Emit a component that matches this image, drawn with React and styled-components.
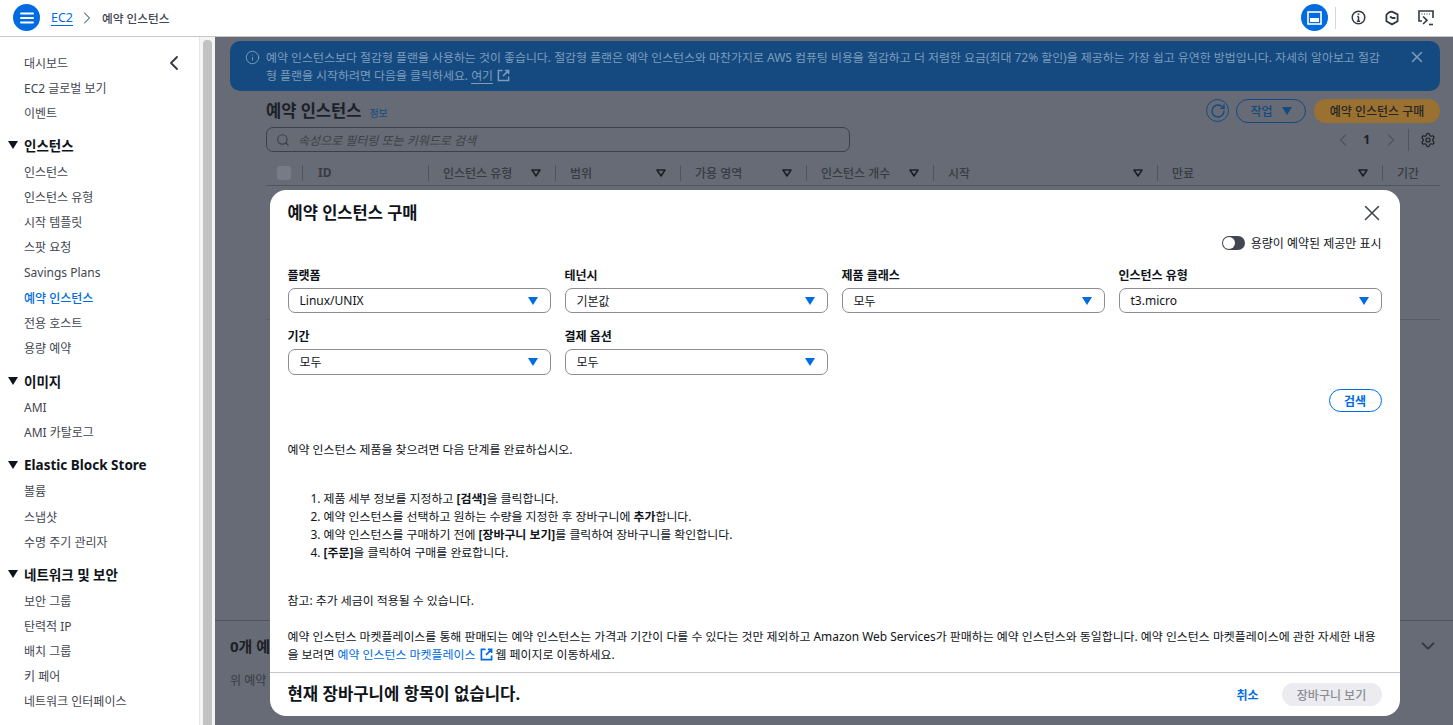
import React from 'react';
import styled, { createGlobalStyle } from 'styled-components';
import { ChevronLeft, ChevronRight, ChevronDown, X, Search, Settings, RotateCw, Info } from 'lucide-react';

const GlobalStyle = createGlobalStyle`
  html, body {
    margin: 0;
    height: 100%;
    overflow: hidden;
    background: #fff;
    font-family: "Noto Sans", "Noto Sans CJK KR", sans-serif;
    font-size: 12px;
    color: #0f141a;
  }
  * { box-sizing: border-box; }
`;

const Shell = styled.div`
  width: 1453px;
  height: 725px;
  display: flex;
  flex-direction: column;
  overflow: hidden;
`;

/* top bar */
const TopBar = styled.header`
  height: 37px;
  flex: none;
  display: flex;
  align-items: center;
  padding: 0 13px 1px 13px;
  border-bottom: 1px solid #c6c6cd;
`;

const RoundButton = styled.div`
  width: 27px;
  height: 27px;
  border-radius: 50%;
  background: #006ce0;
  display: flex;
  align-items: center;
  justify-content: center;
  flex: none;
`;

const Crumbs = styled.div`
  display: flex;
  align-items: center;
  margin-left: 11px;
  font-size: 12px;
  flex: 1;
`;

const CrumbLink = styled.span`
  color: #006ce0;
  font-size: 12.5px;
  border-bottom: 1px solid #006ce0;
  line-height: 15px;
`;

const CrumbCurrent = styled.span`
  color: #424650;
  font-weight: 500;
  font-size: 11.7px;
`;

const CrumbArrow = styled(ChevronRight)`
  margin: 0 5px 0 4px;
  color: #7d8998;
`;

const TopActions = styled.div`
  display: flex;
  align-items: center;
`;

const TopDivider = styled.div`
  width: 1px;
  height: 22px;
  background: #d5d7db;
  margin: 0 13px 0 7px;
`;

const TopIcon = styled.div`
  width: 18px;
  height: 18px;
  margin-right: 16px;
  display: flex;
  align-items: center;
  justify-content: center;
  color: #333843;
  &:last-child { margin-right: 5px; }
`;

/* sidebar */
const Body = styled.div`
  flex: 1;
  display: flex;
  min-height: 0;
`;

const Sidebar = styled.nav`
  position: relative;
  width: 200px;
  flex: none;
  padding: 13px 0 0 8px;
  border-right: 1px solid #e6e6e9;
`;

const CollapseButton = styled(ChevronLeft)`
  position: absolute;
  top: 14px;
  left: 162px;
  color: #333843;
`;

const NavGroup = styled.div`
  margin-bottom: 8px;
`;

const NavItem = styled.div`
  height: 25.15px;
  display: flex;
  align-items: center;
  padding-left: 16px;
  font-size: 12px;
  color: ${p => (p.$active ? '#006ce0' : '#424650')};
  font-weight: ${p => (p.$active ? 500 : 400)};
  white-space: nowrap;
`;

const NavHeading = styled.div`
  height: 26px;
  padding-bottom: 2px;
  display: flex;
  align-items: center;
  font-size: 13.5px;
  font-weight: 700;
  color: #0f141a;
  white-space: nowrap;
`;

const HeadingCaret = styled.span`
  width: 0;
  height: 0;
  margin-right: 6px;
  border-left: 5px solid transparent;
  border-right: 5px solid transparent;
  border-top: 8px solid #0f141a;
`;

const ScrollTrack = styled.div`
  width: 15px;
  flex: none;
  background: #f4f4f4;
  padding: 3px 3px 0 3px;
`;

const ScrollThumb = styled.div`
  height: 100%;
  background: #c2c2c2;
  border-radius: 4px 4px 0 0;
`;

/* dimmed page behind the modal */
const Main = styled.main`
  position: relative;
  flex: 1;
  min-width: 0;
  display: flex;
  flex-direction: column;
  background: #666b75;
  padding-top: 4px;
  overflow: hidden;
`;

const Banner = styled.div`
  margin: 0 13px 0 15px;
  height: 50px;
  flex: none;
  border-radius: 10px;
  background: #154a80;
  color: #7d9cbd;
  display: flex;
  padding: 7px 14px 0 15px;
  font-size: 11.93px;
  line-height: 18px;
`;

const BannerIcon = styled(Info)`
  flex: none;
  margin: 2px 6px 0 0;
  color: #7d9cbd;
`;

const BannerText = styled.div`
  flex: 1;
`;

const BannerLink = styled.span`
  border-bottom: 1px solid #7d9cbd;
`;

const BannerExternal = styled.svg`
  vertical-align: -2px;
  margin-left: 4px;
`;

const BannerClose = styled(X)`
  flex: none;
  margin-left: 20px;
  color: #7d9cbd;
`;

const Page = styled.section`
  margin: 8px 13px 0 51px;
  flex: none;
`;

const HeadRow = styled.div`
  display: flex;
  align-items: center;
  height: 23px;
`;

const PageTitle = styled.h1`
  margin: 0;
  font-size: 16.5px;
  line-height: 23px;
  font-weight: 700;
  color: #1c2028;
`;

const InfoLink = styled.span`
  margin-left: 8px;
  margin-top: 3px;
  color: #154a80;
  font-size: 10px;
`;

const HeadActions = styled.div`
  margin-left: auto;
  display: flex;
  align-items: center;
  gap: 8px;
`;

const RefreshCircle = styled.div`
  width: 23px;
  height: 23px;
  margin-right: -1px;
  border-radius: 50%;
  border: 1px solid #154a80;
  color: #154a80;
  display: flex;
  align-items: center;
  justify-content: center;
`;

const OutlineDim = styled.div`
  width: 70px;
  height: 24px;
  border-radius: 12px;
  border: 1px solid #154a80;
  color: #154a80;
  font-size: 12px;
  font-weight: 500;
  display: flex;
  align-items: center;
  justify-content: center;
  gap: 9px;
`;

const ActionCaret = styled.span`
  width: 0;
  height: 0;
  border-left: 5px solid transparent;
  border-right: 5px solid transparent;
  border-top: 8px solid #154a80;
`;

const OrangeDim = styled.div`
  width: 126px;
  height: 24px;
  border-radius: 12px;
  background: #9a7131;
  color: #262626;
  font-size: 12px;
  font-weight: 500;
  display: flex;
  align-items: center;
  justify-content: center;
`;

const ToolRow = styled.div`
  display: flex;
  align-items: center;
  margin-top: 5px;
  height: 25px;
`;

const SearchBox = styled.div`
  width: 584px;
  height: 25px;
  border: 1px solid #3c4048;
  border-radius: 7px;
  display: flex;
  align-items: center;
  padding-left: 9px;
  gap: 8px;
  color: #3c4048;
  font-size: 12px;
  font-style: italic;
`;

const Pager = styled.div`
  margin-left: auto;
  display: flex;
  align-items: center;
  color: #1c2028;
  font-weight: 700;
  font-size: 12px;
`;

const PagerDivider = styled.div`
  width: 1px;
  height: 22px;
  background: #50545c;
  margin: 0 11px 0 7px;
`;

const PagerNumber = styled.span`
  margin: 0 11px 0 10px;
`;

const PagerArrow = styled(ChevronLeft)`
  color: #50545c;
`;

const PagerArrowNext = styled(ChevronRight)`
  color: #50545c;
`;

const PagerGear = styled(Settings)`
  color: #1c2028;
  margin-right: 4px;
`;

const TableHead = styled.div`
  margin-top: 8px;
  height: 26px;
  display: grid;
  grid-template-columns: 36px 126px 127px 125px 126px 127px 224px 225px 59px;
  align-items: center;
  border-bottom: 1px solid #50545c;
`;

const Cell = styled.div`
  height: 16px;
  display: flex;
  align-items: center;
  justify-content: space-between;
  padding: 0 14px 0 ${p => (p.$first ? '15px' : '14px')};
  font-size: 12px;
  font-weight: ${p => (p.$bold ? 700 : 500)};
  color: #373b44;
  border-left: 1px solid #50545c;
  white-space: nowrap;
`;

const DimCheck = styled.div`
  width: 14px;
  height: 14px;
  margin-left: 11px;
  border-radius: 3px;
  background: #767b85;
`;

const TableEnd = styled.div`
  height: 134px;
  border-bottom: 1px solid #5a5e68;
`;

const SplitPanel = styled.section`
  margin-top: auto;
  height: 105px;
  flex: none;
  border-top: 1px solid #50545c;
  padding: 14px 15px 0 15px;
  position: relative;
`;

const SplitTitle = styled.div`
  font-size: 15px;
  font-weight: 700;
  color: #1c2028;
  line-height: 22px;
`;

const SplitText = styled.div`
  margin-top: 14px;
  font-size: 12px;
  color: #373b44;
`;

const SplitChevron = styled(ChevronDown)`
  position: absolute;
  top: 14px;
  right: 14px;
  color: #373b44;
`;

/* modal */
const ModalLayer = styled.div`
  position: absolute;
  inset: 0;
  display: flex;
  align-items: flex-end;
  justify-content: center;
  padding: 0 0 9px 1px;
`;

const Modal = styled.div`
  width: 1130px;
  height: 526px;
  background: #fff;
  border-radius: 16px;
  display: flex;
  flex-direction: column;
  overflow: hidden;
`;

const ModalHead = styled.div`
  height: 35px;
  flex: none;
  display: flex;
  align-items: center;
  justify-content: space-between;
  padding: 11px 18px 0 18px;
`;

const ModalTitle = styled.h2`
  margin: 0;
  font-size: 16.5px;
  line-height: 24px;
  font-weight: 700;
  color: #0f141a;
`;

const ModalClose = styled(X)`
  color: #424650;
  margin-right: -3px;
`;

const ModalBody = styled.div`
  flex: 1;
  min-height: 0;
  padding: 0 18px;
  border-bottom: 1px solid #c6c6cd;
`;

const ToggleRow = styled.div`
  display: flex;
  justify-content: flex-end;
  align-items: center;
  height: 18px;
  margin-top: 9px;
  gap: 6px;
  font-size: 12px;
  color: #0f141a;
`;

const ToggleTrack = styled.div`
  width: 23px;
  height: 14px;
  border-radius: 7px;
  background: #424650;
  padding: 1px;
`;

const ToggleKnob = styled.div`
  width: 12px;
  height: 12px;
  border-radius: 50%;
  background: #fff;
`;

const FilterGrid = styled.div`
  margin-top: 16px;
  display: grid;
  grid-template-columns: repeat(4, 263px);
  column-gap: 14px;
  row-gap: 16px;
`;

const Field = styled.div`
  display: flex;
  flex-direction: column;
  gap: 4px;
`;

const FieldLabel = styled.div`
  font-size: 12px;
  line-height: 16px;
  font-weight: 700;
  color: #0f141a;
`;

const Select = styled.div`
  height: ${p => (p.$tall ? '26px' : '25px')};
  border: 1px solid #8c8c94;
  border-radius: 7px;
  display: flex;
  align-items: center;
  justify-content: space-between;
  padding: 0 12px 0 11px;
  font-size: 12px;
  color: #0f141a;
`;

const BlueCaret = styled.span`
  width: 0;
  height: 0;
  border-left: 5px solid transparent;
  border-right: 5px solid transparent;
  border-top: 8px solid #006ce0;
`;

const SearchRow = styled.div`
  display: flex;
  justify-content: flex-end;
  margin-top: 14px;
`;

const SearchButton = styled.div`
  width: 53px;
  height: 23px;
  border: 1px solid #006ce0;
  border-radius: 12px;
  color: #006ce0;
  font-size: 12px;
  font-weight: 700;
  display: flex;
  align-items: center;
  justify-content: center;
`;

const BodyText = styled.p`
  margin: ${p => p.$top || 0}px 0 0 0;
  font-size: 11.93px;
  line-height: 18px;
  color: #0f141a;
`;

const Steps = styled.ol`
  margin: 31px 0 0 0;
  padding: 0 0 0 36px;
  font-size: 11.93px;
  line-height: 18px;
  color: #0f141a;
`;

const Market = styled.span`
  color: #006ce0;
`;

const ExternalIcon = styled.svg`
  vertical-align: -2px;
  margin: 0 3px 0 1px;
`;

const ModalFoot = styled.div`
  height: 43px;
  flex: none;
  display: flex;
  align-items: center;
  padding: 0 18px;
`;

const CartText = styled.div`
  font-size: 16.7px;
  margin-bottom: 3px;
  font-weight: 700;
  color: #0f141a;
`;

const CancelLink = styled.div`
  margin-left: auto;
  color: #006ce0;
  font-size: 12px;
  font-weight: 700;
  margin-right: 23px;
`;

const CartButton = styled.div`
  width: 100px;
  height: 23px;
  border-radius: 12px;
  background: #ebebf0;
  color: #8c8c94;
  font-size: 12px;
  font-weight: 500;
  display: flex;
  align-items: center;
  justify-content: center;
`;

const NAV = [
  { items: ['대시보드', 'EC2 글로벌 보기', '이벤트'] },
  { title: '인스턴스', items: ['인스턴스', '인스턴스 유형', '시작 템플릿', '스팟 요청', 'Savings Plans', '예약 인스턴스', '전용 호스트', '용량 예약'] },
  { title: '이미지', items: ['AMI', 'AMI 카탈로그'] },
  { title: 'Elastic Block Store', items: ['볼륨', '스냅샷', '수명 주기 관리자'] },
  { title: '네트워크 및 보안', items: ['보안 그룹', '탄력적 IP', '배치 그룹', '키 페어', '네트워크 인터페이스'] },
];

const COLUMNS = [
  { label: '인스턴스 유형', sort: true },
  { label: '범위', sort: true },
  { label: '가용 영역', sort: true },
  { label: '인스턴스 개수', sort: true },
  { label: '시작', sort: true },
  { label: '만료', sort: true },
  { label: '기간' },
];

const FILTERS = [
  { label: '플랫폼', value: 'Linux/UNIX' },
  { label: '테넌시', value: '기본값' },
  { label: '제품 클래스', value: '모두' },
  { label: '인스턴스 유형', value: 't3.micro' },
  { label: '기간', value: '모두', tall: true },
  { label: '결제 옵션', value: '모두', tall: true },
];

function SortIcon() {
  return (
    <svg width="10" height="8" viewBox="0 0 10 8" fill="none" stroke="#1c2028" strokeWidth="1.6" strokeLinejoin="round">
      <path d="M1 1h8L5 7Z" />
    </svg>
  );
}

function App() {
  return (
    <Shell>
      <GlobalStyle />
      <TopBar>
        <RoundButton>
          <svg width="14" height="12" viewBox="0 0 14 12" fill="none" stroke="#fff" strokeWidth="2" strokeLinecap="round">
            <path d="M1 1.500h12M1 6h12M1 10.500h12" />
          </svg>
        </RoundButton>
        <Crumbs>
          <CrumbLink>EC2</CrumbLink>
          <CrumbArrow size={20} strokeWidth={1.4} />
          <CrumbCurrent>예약 인스턴스</CrumbCurrent>
        </Crumbs>
        <TopActions>
          <RoundButton>
            <svg width="15" height="14" viewBox="0 0 15 14">
              <rect x="1" y="1" width="13" height="12" fill="none" stroke="#fff" strokeWidth="1.6" />
              <rect x="3" y="7" width="9" height="4" fill="#fff" />
            </svg>
          </RoundButton>
          <TopDivider />
          <TopIcon>
            <svg width="15" height="15" viewBox="0 0 16 16" fill="none" stroke="currentColor" strokeWidth="1.6">
              <circle cx="8" cy="8" r="6.700" />
              <path d="M8 7v5M6.300 12h3.400M6.600 7H8" />
              <path d="M8 3.600v1.600" strokeWidth="1.800" />
            </svg>
          </TopIcon>
          <TopIcon>
            <svg width="16" height="16" viewBox="0 0 16 16" fill="none" stroke="currentColor" strokeWidth="1.800">
              <path d="M8 1.600 13.600 4.400v6.800L8 14.400 2.400 11.200V4.900a7 7 0 0 1 5.600-3.300Z" strokeLinejoin="round" />
              <path d="M6 6.400 8.400 8h3" />
            </svg>
          </TopIcon>
          <TopIcon>
            <svg width="16" height="16" viewBox="0 0 16 16" fill="none" stroke="currentColor" strokeWidth="1.600">
              <path d="M4 11H1V1h14v7" />
              <path d="M3.500 4h1M6 4h1M8.500 4h1M11 4h1" strokeWidth="1.200" />
              <path d="M5 6.500 9 10.300 5 14" />
              <path d="M11 14.500h4" />
            </svg>
          </TopIcon>
        </TopActions>
      </TopBar>
      <Body>
        <Sidebar>
          <CollapseButton size={24} strokeWidth={1.8} />
          {NAV.map((group, i) => (
            <NavGroup key={i}>
              {group.title && (
                <NavHeading>
                  <HeadingCaret />
                  {group.title}
                </NavHeading>
              )}
              {group.items.map(item => (
                <NavItem key={item} $active={item === '예약 인스턴스'}>{item}</NavItem>
              ))}
            </NavGroup>
          ))}
        </Sidebar>
        <ScrollTrack>
          <ScrollThumb />
        </ScrollTrack>
        <Main>
          <Banner>
            <BannerIcon size={15} strokeWidth={1.5} />
            <BannerText>
              예약 인스턴스보다 절감형 플랜을 사용하는 것이 좋습니다. 절감형 플랜은 예약 인스턴스와 마찬가지로 AWS 컴퓨팅 비용을 절감하고 더 저렴한 요금(최대 72% 할인)을 제공하는 가장 쉽고 유연한 방법입니다. 자세히 알아보고 절감형 플랜을 시작하려면 다음을 클릭하세요. <BannerLink>여기</BannerLink>
              <BannerExternal width="13" height="13" viewBox="0 0 14 14" fill="none" stroke="#7d9cbd" strokeWidth="1.600">
                <path d="M6 1.500H1.500v11h11V8M8.500 1.500h4v4M12.500 1.500 6.500 7.500" />
              </BannerExternal>
            </BannerText>
            <BannerClose size={18} strokeWidth={2} />
          </Banner>
          <Page>
            <HeadRow>
              <PageTitle>예약 인스턴스</PageTitle>
              <InfoLink>정보</InfoLink>
              <HeadActions>
                <RefreshCircle><RotateCw size={16} strokeWidth={2} /></RefreshCircle>
                <OutlineDim>작업<ActionCaret /></OutlineDim>
                <OrangeDim>예약 인스턴스 구매</OrangeDim>
              </HeadActions>
            </HeadRow>
            <ToolRow>
              <SearchBox>
                <Search size={14} strokeWidth={2} />
                속성으로 필터링 또는 키워드로 검색
              </SearchBox>
              <Pager>
                <PagerArrow size={20} strokeWidth={1.600} />
                <PagerNumber>1</PagerNumber>
                <PagerArrowNext size={20} strokeWidth={1.600} />
                <PagerDivider />
                <PagerGear size={16} strokeWidth={1.800} />
              </Pager>
            </ToolRow>
            <TableHead>
              <DimCheck />
              <Cell $first $bold>ID</Cell>
              {COLUMNS.map(col => (
                <Cell key={col.label}>
                  {col.label}
                  {col.sort && <SortIcon />}
                </Cell>
              ))}
            </TableHead>
            <TableEnd />
          </Page>
          <SplitPanel>
            <SplitTitle>0개 예약 인스턴스 선택됨</SplitTitle>
            <SplitText>위 예약 인스턴스 테이블에서 항목을 선택하세요.</SplitText>
            <SplitChevron size={22} strokeWidth={2} />
          </SplitPanel>
          <ModalLayer>
            <Modal>
              <ModalHead>
                <ModalTitle>예약 인스턴스 구매</ModalTitle>
                <ModalClose size={26} strokeWidth={1.400} />
              </ModalHead>
              <ModalBody>
                <ToggleRow>
                  <ToggleTrack><ToggleKnob /></ToggleTrack>
                  용량이 예약된 제공만 표시
                </ToggleRow>
                <FilterGrid>
                  {FILTERS.map(f => (
                    <Field key={f.label}>
                      <FieldLabel>{f.label}</FieldLabel>
                      <Select $tall={f.tall}>
                        {f.value}
                        <BlueCaret />
                      </Select>
                    </Field>
                  ))}
                </FilterGrid>
                <SearchRow>
                  <SearchButton>검색</SearchButton>
                </SearchRow>
                <BodyText $top={28}>예약 인스턴스 제품을 찾으려면 다음 단계를 완료하십시오.</BodyText>
                <Steps>
                  <li>제품 세부 정보를 지정하고 <b>[검색]</b>을 클릭합니다.</li>
                  <li>예약 인스턴스를 선택하고 원하는 수량을 지정한 후 장바구니에 <b>추가</b>합니다.</li>
                  <li>예약 인스턴스를 구매하기 전에 <b>[장바구니 보기]</b>를 클릭하여 장바구니를 확인합니다.</li>
                  <li><b>[주문]</b>을 클릭하여 구매를 완료합니다.</li>
                </Steps>
                <BodyText $top={30}>참고: 추가 세금이 적용될 수 있습니다.</BodyText>
                <BodyText $top={18}>
                  예약 인스턴스 마켓플레이스를 통해 판매되는 예약 인스턴스는 가격과 기간이 다를 수 있다는 것만 제외하고 Amazon Web Services가 판매하는 예약 인스턴스와 동일합니다. 예약 인스턴스 마켓플레이스에 관한 자세한 내용을 보려면 <Market>예약 인스턴스 마켓플레이스</Market>{' '}
                  <ExternalIcon width="13" height="13" viewBox="0 0 14 14" fill="none" stroke="#006ce0" strokeWidth="1.800">
                    <path d="M6 1.500H1.500v11h11V8M8.500 1.500h4v4M12.500 1.500 6.500 7.500" />
                  </ExternalIcon>
                  웹 페이지로 이동하세요.
                </BodyText>
              </ModalBody>
              <ModalFoot>
                <CartText>현재 장바구니에 항목이 없습니다.</CartText>
                <CancelLink>취소</CancelLink>
                <CartButton>장바구니 보기</CartButton>
              </ModalFoot>
            </Modal>
          </ModalLayer>
        </Main>
      </Body>
    </Shell>
  );
}

export default App;
